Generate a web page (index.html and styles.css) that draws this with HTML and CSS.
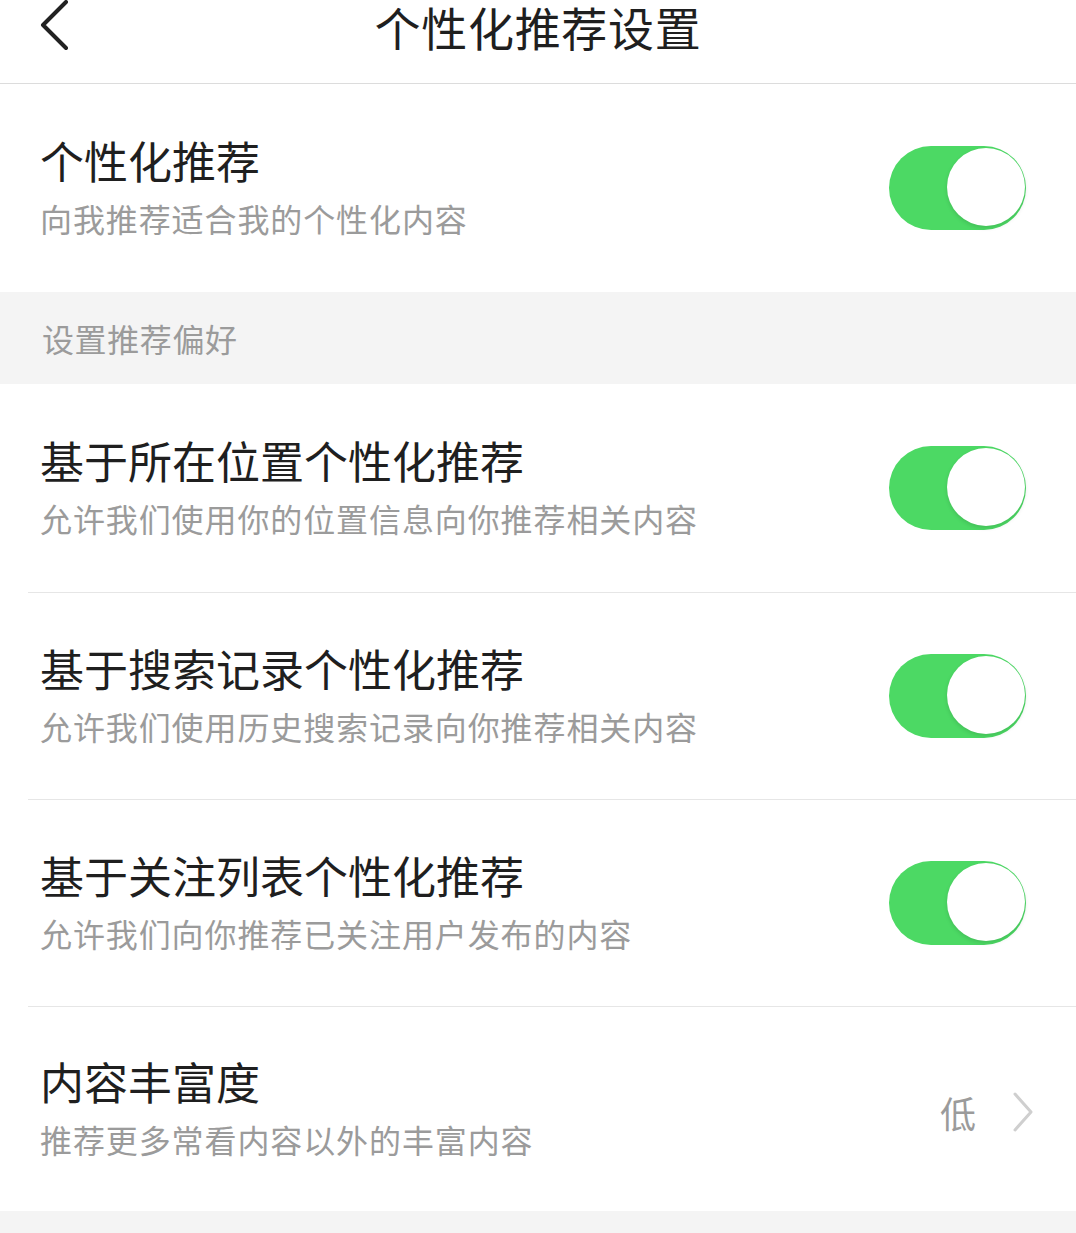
FILE: index.html
```html
<!DOCTYPE html>
<html lang="zh-CN">
<head>
    <meta charset="UTF-8">
    <meta name="viewport" content="width=device-width, initial-scale=1.0">
    <title>个性化推荐设置</title>
    <link rel="stylesheet" href="styles.css">
</head>
<body>
    <div class="header">
        <div class="back">
            <svg width="30" height="52" viewBox="0 0 30 52">
                <path d="M27 2 L4 25 L27 48" fill="none" stroke="#222" stroke-width="4" stroke-linecap="round" stroke-linejoin="round"/>
            </svg>
        </div>
        <h1>个性化推荐设置</h1>
        <div></div>
    </div>

    <div class="row">
        <div class="text">
            <div class="title">个性化推荐</div>
            <div class="desc">向我推荐适合我的个性化内容</div>
        </div>
        <div class="switch on"><span class="knob"></span></div>
    </div>

    <div class="section">设置推荐偏好</div>

    <div class="row">
        <div class="text">
            <div class="title">基于所在位置个性化推荐</div>
            <div class="desc">允许我们使用你的位置信息向你推荐相关内容</div>
        </div>
        <div class="switch on"><span class="knob"></span></div>
    </div>
    <div class="row line">
        <div class="text">
            <div class="title">基于搜索记录个性化推荐</div>
            <div class="desc">允许我们使用历史搜索记录向你推荐相关内容</div>
        </div>
        <div class="switch on"><span class="knob"></span></div>
    </div>
    <div class="row line">
        <div class="text">
            <div class="title">基于关注列表个性化推荐</div>
            <div class="desc">允许我们向你推荐已关注用户发布的内容</div>
        </div>
        <div class="switch on"><span class="knob"></span></div>
    </div>
    <div class="row line last">
        <div class="text">
            <div class="title">内容丰富度</div>
            <div class="desc">推荐更多常看内容以外的丰富内容</div>
        </div>
        <div class="value">
            <span>低</span>
            <svg width="22" height="40" viewBox="0 0 22 40">
                <path d="M3 2 L19 20 L3 38" fill="none" stroke="#cfcfcf" stroke-width="3" stroke-linecap="round" stroke-linejoin="round"/>
            </svg>
        </div>
    </div>
    <div class="footer"></div>
</body>
</html>
```

FILE: styles.css
```css
:root {
    --green: #4cd964;
    --text-main: #1f1f1f;
    --text-sub: #9b9b9b;
    --bg-gray: #f4f4f4;
    --line: #e6e6e6;
}
body {
    margin: 0;
    font-family: "Noto Sans CJK SC", "Noto Sans", sans-serif;
    background: #fff;
    color: var(--text-main);
}
.header {
    display: grid;
    grid-template-columns: 1fr auto 1fr;
    align-items: start;
    height: 84px;
    border-bottom: 1px solid #dcdcdc;
    box-sizing: border-box;
}
.back {
    padding-left: 39px;
}
.back svg {
    display: block;
}
.header h1 {
    margin: 2px 0 0;
    font-size: 46px;
    font-weight: 400;
    line-height: 48px;
    letter-spacing: 0.7px;
}
.row {
    display: flex;
    align-items: center;
    justify-content: space-between;
    height: 208px;
    padding: 0 50px 0 40px;
    box-sizing: border-box;
}
.row.line {
    height: 207px;
    position: relative;
}
.row.last {
    height: 205px;
}
.row.line::before {
    content: "";
    position: absolute;
    top: 0;
    left: 28px;
    right: 0;
    height: 1px;
    background: var(--line);
}
.text {
    display: flex;
    flex-direction: column;
    gap: 12px;
    margin-top: -4px;
}
.title {
    font-size: 44px;
    line-height: 52px;
    color: var(--text-main);
}
.desc {
    font-size: 32px;
    line-height: 40px;
    color: var(--text-sub);
    letter-spacing: 0.9px;
}
.section {
    background: var(--bg-gray);
    height: 92px;
    padding-left: 42px;
    font-size: 32px;
    line-height: 92px;
    color: var(--text-sub);
    letter-spacing: 0.6px;
}
.switch {
    width: 137px;
    height: 84px;
    border-radius: 42px;
    background: var(--green);
    position: relative;
    flex-shrink: 0;
}
.knob {
    position: absolute;
    right: 1px;
    top: 2px;
    width: 78px;
    height: 78px;
    border-radius: 50%;
    background: #fff;
    box-shadow: 0 2px 4px rgba(0, 0, 0, 0.12);
}
.value {
    display: flex;
    align-items: center;
    gap: 36px;
    margin-right: -8px;
    margin-top: 6px;
}
.value span {
    font-size: 36px;
    color: var(--text-sub);
}
.value svg {
    display: block;
}
.footer {
    height: 30px;
    background: var(--bg-gray);
}
```
